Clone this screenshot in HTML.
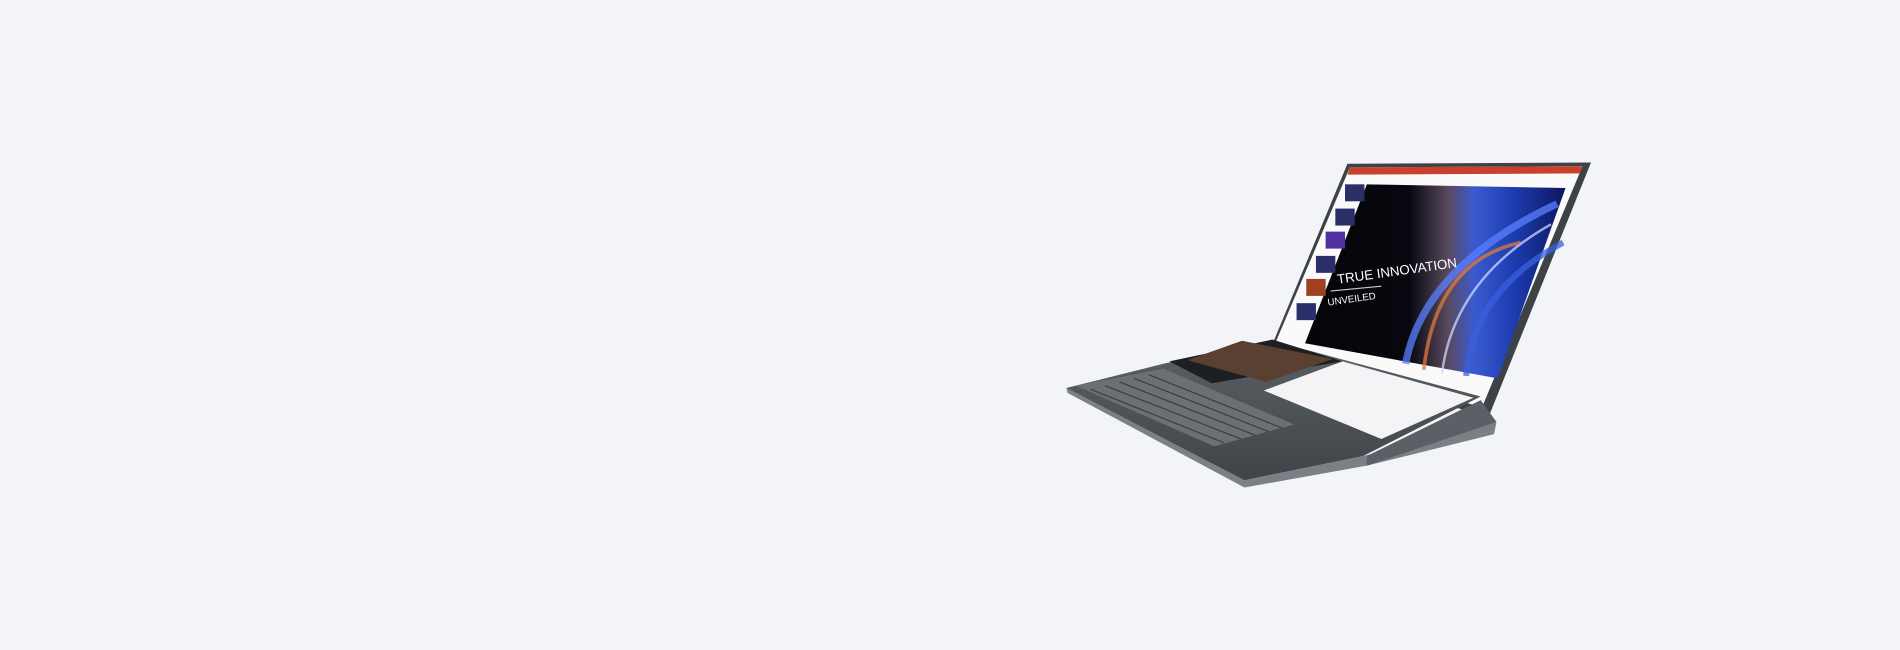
<!DOCTYPE html>
<html><head><meta charset="utf-8"><style>
html,body{margin:0;padding:0;width:1900px;height:650px;overflow:hidden;background:#f3f4f8}
svg{display:block}
</style></head><body>
<svg width="1900" height="650" viewBox="0 0 1568 536" preserveAspectRatio="none" xmlns="http://www.w3.org/2000/svg">
<defs>
<linearGradient id="sl" x1="0" y1="0" x2="1" y2="0">
<stop offset="0" stop-color="#050508"/><stop offset="0.4" stop-color="#07080f"/>
<stop offset="0.55" stop-color="#5a4a60"/><stop offset="0.65" stop-color="#3a5ad0"/>
<stop offset="0.8" stop-color="#1e3cb0"/><stop offset="1" stop-color="#0c1660"/>
</linearGradient>
<linearGradient id="base" x1="0" y1="0" x2="0" y2="1">
<stop offset="0" stop-color="#5c6167"/><stop offset="1" stop-color="#3f4448"/>
</linearGradient>
</defs>
<polygon points="1112,135 1313,134 1228,345 1050,284" fill="#3c4246"/>
<polygon points="1114,138 1306,137 1223,336 1052,284" fill="#fafafa"/>
<polygon points="1114,138 1306,137 1304,143 1112,144" fill="#c8412a"/>
<polygon points="1128,152 1292,155 1236,312 1077,283" fill="url(#sl)"/>
<g fill="none" opacity=".75">
<path d="M1160 300 Q1175 220 1285 168" stroke="#5a80ff" stroke-width="6"/>
<path d="M1175 305 Q1185 215 1255 200" stroke="#e07a3a" stroke-width="3"/>
<path d="M1190 308 Q1200 230 1280 185" stroke="#d0d8ff" stroke-width="2"/>
<path d="M1210 310 Q1215 240 1290 200" stroke="#3a60e0" stroke-width="5"/>
</g>
<g fill="#2a2f6a">
<rect x="1110" y="152" width="16" height="14"/><rect x="1102" y="172" width="16" height="14"/>
<rect x="1094" y="191" width="16" height="14" fill="#5030a0"/><rect x="1086" y="211" width="16" height="14"/>
<rect x="1078" y="230" width="16" height="14" fill="#a04020"/><rect x="1070" y="250" width="16" height="14"/>
</g>
<text x="1104" y="234" fill="#fff" font-family="Liberation Sans, sans-serif" font-size="11" transform="rotate(-8 1104 234)">TRUE INNOVATION</text>
<line x1="1098" y1="240" x2="1140" y2="236" stroke="#ccc" stroke-width="1"/>
<text x="1096" y="252" fill="#fff" font-family="Liberation Sans, sans-serif" font-size="8" transform="rotate(-8 1096 252)">UNVEILED</text>
<polygon points="880,320 1027,396 1125,376 1235,348 1233,358 1128,384 1027,402 881,324" fill="#7a8086"/>
<polygon points="880,320 960,300 1050,281 1222,327 1125,376 1027,396" fill="url(#base)"/>
<polygon points="965,298 1050,280 1108,298 1000,316" fill="#1e1f22"/>
<polygon points="980,297 1025,281 1100,296 1045,315" fill="#5a4030"/>
<polygon points="1043,322 1108,298 1216,328 1140,362" fill="#f4f4f6"/>
<polygon points="888,318 960,304 1068,350 1002,368" fill="#6b7075"/>
<g stroke="#3a3e42" stroke-width="1">
<line x1="900" y1="321" x2="1010" y2="365"/><line x1="912" y1="318" x2="1024" y2="362"/>
<line x1="924" y1="315" x2="1036" y2="359"/><line x1="936" y1="312" x2="1047" y2="356"/>
<line x1="948" y1="309" x2="1058" y2="353"/>
</g>
<polygon points="1128,376 1222,330 1235,348 1128,384" fill="#5a6066"/>
</svg>
</body></html>
